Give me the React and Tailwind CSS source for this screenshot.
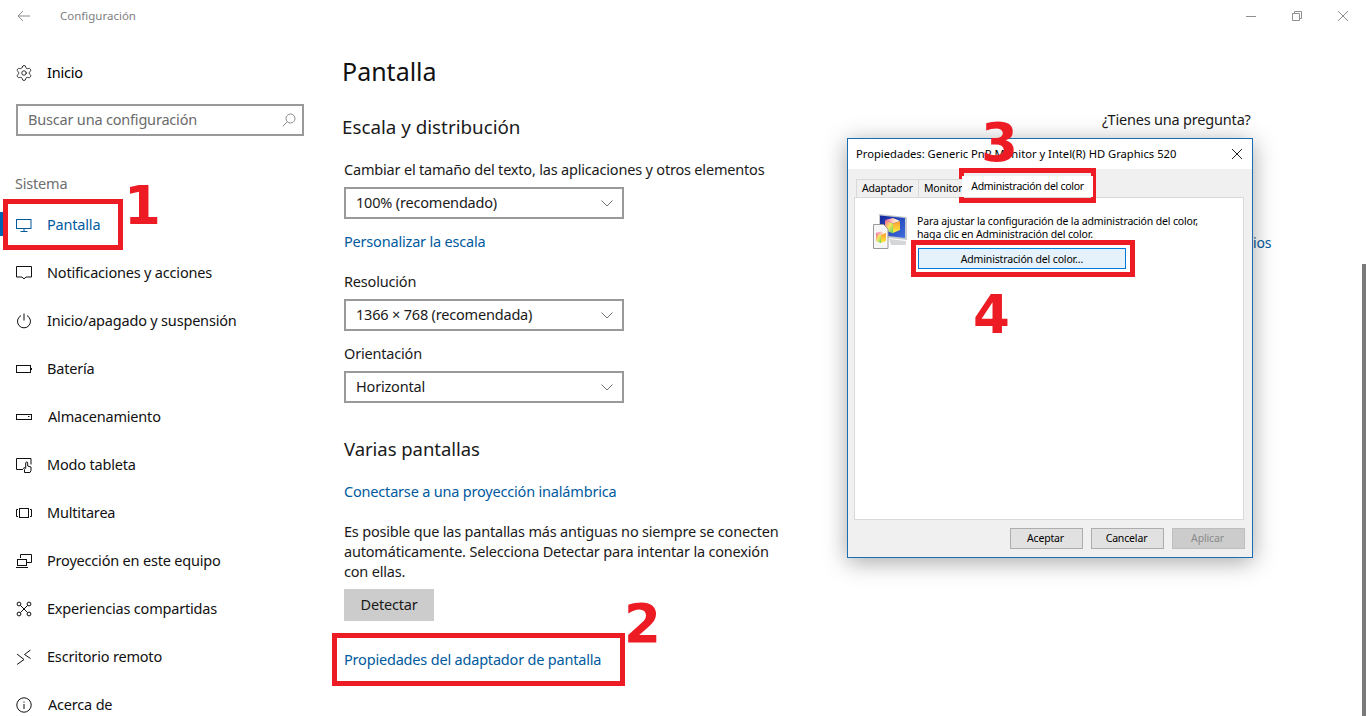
import React from 'react';
import { Settings } from 'lucide-react';

const Ico = ({ children }) => (
  <svg width="16" height="16" viewBox="0 0 16 16" fill="none" stroke="currentColor" strokeWidth="1" className="shrink-0">
    {children}
  </svg>
);

const navItems = [
  { label: 'Notificaciones y acciones', icon: <path d="M0.5 1.5h15v10.5h-5.5l-2 2-2-2h-5.5z" /> },
  { label: 'Inicio/apagado y suspensión', icon: <><path d="M8 0.5v7" /><path d="M5 2.6a6.5 6.5 0 1 0 6 0" /></> },
  { label: 'Batería', icon: <><rect x="0.5" y="4.5" width="14" height="7" /><path d="M15.5 7v2" /></> },
  { label: 'Almacenamiento', icon: <><rect x="0.5" y="5.5" width="15" height="5" /><path d="M12 7.5h1.5" /></>, shift: true },
  { label: 'Modo tableta', icon: <><path d="M7 12.5h-6.5v-11h14.5v6" /><path d="M8.5 15.5v-3l-1-1.5 1-0.5 1.2 1v-5.5a1 1 0 0 1 2 0v3l3.3 1v3.5l-1 2z" /></> },
  { label: 'Multitarea', icon: <><rect x="3.5" y="3.5" width="9" height="9" /><path d="M2 4.5h-1.5v7h1.5M14 4.5h1.5v7h-1.5" /></> },
  { label: 'Proyección en este equipo', icon: <><path d="M4.5 5v-3.5h11v8h-5" /><rect x="1.5" y="6.5" width="9" height="6" /><path d="M0 14.5h12" /></> },
  { label: 'Experiencias compartidas', icon: <><circle cx="3" cy="3" r="1.9" /><circle cx="13" cy="3" r="1.9" /><circle cx="3" cy="13" r="1.9" /><circle cx="13" cy="13" r="1.9" /><path d="M4.4 4.4l7.2 7.2M11.6 4.4l-7.2 7.2" /></> },
  { label: 'Escritorio remoto', icon: <><path d="M1 5l7 5.5-7 5" /><path d="M14.5 1l-6 4.5 6 4" /></> },
  { label: 'Acerca de', icon: <><circle cx="8" cy="8" r="7.2" /><path d="M8 7v5M8 4.5v1.2" /></>, shift: true },
];

const Select = ({ value }) => (
  <div className="w-[280px] h-8 border-2 border-[#999999] flex items-center justify-between pl-[10px] pr-[9px] text-[14.5px] text-[#1a1a1a]">
    <span className="-mt-px">{value}</span>
    <svg width="12" height="7" viewBox="0 0 12 7" fill="none" stroke="#767676" strokeWidth="1"><path d="M0.5 0.5L6 6l5.5-5.5" /></svg>
  </div>
);

const Mark = ({ className }) => <div className={`absolute border-[5px] border-[#ed1c24] ${className}`} />;

const Num = ({ className, children }) => (
  <div className={`absolute font-['DejaVu_Sans',sans-serif] font-bold text-[53px] leading-[58px] tracking-normal text-[#ed1c24] ${className}`}>{children}</div>
);

const DialogButton = ({ children, disabled }) => (
  <div className={`w-[73px] h-[21px] border flex items-center justify-center pt-px pr-[2px] text-[10.5px] ${disabled ? 'border-[#bfbfbf] bg-[#cccccc] text-[#8a8a8a]' : 'border-[#adadad] bg-[#e1e1e1] text-black'}`}>
    {children}
  </div>
);

const ColorIcon = () => (
  <svg width="34" height="35" viewBox="0 0 34 35" className="shrink-0">
    <defs>
      <linearGradient id="scr" x1="0" y1="0" x2="1" y2="1">
        <stop offset="0" stopColor="#12269a" />
        <stop offset="1" stopColor="#3f6fe0" />
      </linearGradient>
      <linearGradient id="top" x1="0" y1="0" x2="1" y2="0">
        <stop offset="0" stopColor="#ff5fa8" />
        <stop offset="0.6" stopColor="#ffd9c0" />
        <stop offset="1" stopColor="#ffffff" />
      </linearGradient>
      <linearGradient id="right" x1="0" y1="0" x2="0" y2="1">
        <stop offset="0" stopColor="#ff9a30" />
        <stop offset="1" stopColor="#f8f040" />
      </linearGradient>
      <linearGradient id="left" x1="0" y1="0" x2="1" y2="1">
        <stop offset="0" stopColor="#f05aa0" />
        <stop offset="0.5" stopColor="#f8e860" />
        <stop offset="1" stopColor="#50d060" />
      </linearGradient>
    </defs>
    <path d="M6 0l28 3v23l-28-3z" fill="#c8ccd0" />
    <path d="M7 1.5l25 2.5v20l-25-3z" fill="url(#scr)" />
    <path d="M16 25l17 2v4l-15 0z" fill="#d4d6d8" />
    <path d="M12 6l8-2 7 3-7 2.500z" fill="url(#top)" />
    <path d="M12 6l8 3.500v10l-8-3.500z" fill="url(#left)" />
    <path d="M20 9.500l7-2.500v9l-7 3z" fill="url(#right)" />
    <path d="M0.500 10.500h10l4.500 4.500v19.500h-14.500z" fill="#f6f6f6" stroke="#9a9a9a" strokeWidth="1" />
    <path d="M3 19l5-1.500 5 1.500-5 2z" fill="url(#top)" />
    <path d="M3 19l5 2v8l-5-2z" fill="url(#left)" />
    <path d="M8 21l5-2v8l-5 2z" fill="url(#right)" />
  </svg>
);

export default function App() {
  return (
    <div className="relative w-[1366px] h-[716px] overflow-hidden bg-white flex flex-col font-['Noto_Sans',sans-serif] tracking-[-0.19px] text-[#1a1a1a]">
      {/* title bar */}
      <div className="h-8 flex items-center shrink-0 text-[#8f8f8f]">
        <svg width="14" height="12" viewBox="0 0 14 12" fill="none" stroke="#8a8a8a" strokeWidth="1" className="ml-[17px]"><path d="M13 6H1M6 1L1 6l5 5" /></svg>
        <span className="ml-[29px] text-[11.5px] tracking-normal text-[#7e7e7e]">Configuración</span>
        <div className="ml-auto flex items-center">
          <svg width="46" height="12" viewBox="0 0 46 12" stroke="#8f8f8f" strokeWidth="1"><path d="M18 6.500h10" /></svg>
          <svg width="46" height="12" viewBox="0 0 46 12" fill="none" stroke="#8f8f8f" strokeWidth="1"><path d="M18.500 3.500h7v7h-7zM20.500 3.500v-2h7v7h-2" /></svg>
          <svg width="46" height="12" viewBox="0 0 46 12" fill="none" stroke="#8f8f8f" strokeWidth="1"><path d="M18 1l10 10M28 1l-10 10" /></svg>
        </div>
      </div>

      <div className="flex flex-1 min-h-0">
        {/* sidebar */}
        <div className="w-[344px] shrink-0">
          <div className="h-12 mt-[17px] flex items-center pl-[15px] gap-[14px] text-[14.5px] text-black">
            <Settings size={18} strokeWidth={1.05} className="shrink-0" />
            <span>Inicio</span>
          </div>
          <div className="ml-4 mt-[7px] w-[288px] h-8 border-2 border-[#999999] flex items-center justify-between pl-[10px] pr-[6px] text-[14.5px] text-[#6b6b6b]">
            <span>Buscar una configuración</span>
            <svg width="14" height="14" viewBox="0 0 14 14" fill="none" stroke="#8a8a8a" strokeWidth="1"><circle cx="8.500" cy="5.500" r="4.500" /><path d="M5.300 8.700L0.800 13.200" /></svg>
          </div>
          <div className="ml-[15px] mt-[37px] leading-5 text-[14.5px] text-[#6e6e6e]">Sistema</div>
          <div className="relative mt-2 h-12 flex items-center pl-4 gap-[15px] text-[14.5px] text-[#005a9e]">
            <div className="absolute left-0 top-[11px] w-[3px] h-[24px] bg-[#0063b1]" />
            <svg width="16" height="16" viewBox="0 0 16 16" fill="none" stroke="currentColor" strokeWidth="1" className="shrink-0"><rect x="0.500" y="2.500" width="14.500" height="9" /><path d="M8 12v2.500M4.500 14.500h7" /></svg>
            <span>Pantalla</span>
          </div>
          {navItems.map((item) => (
            <div key={item.label} className={`h-12 flex items-center pl-4 text-[14.5px] text-[#111111] ${item.shift ? 'gap-4' : 'gap-[15px]'}`}>
              <Ico>{item.icon}</Ico>
              <span>{item.label}</span>
            </div>
          ))}
        </div>

        {/* main */}
        <div className="flex-1 min-w-0">
          <div className="-ml-[2px] mt-[19px] text-[25px] tracking-normal leading-10 text-[#111111]">Pantalla</div>
          <div className="-ml-[2px] mt-[22px] text-[18.8px] tracking-normal leading-7">Escala y distribución</div>
          <div className="mt-[18px] text-[14.5px] leading-5">Cambiar el tamaño del texto, las aplicaciones y otros elementos</div>
          <div className="mt-2"><Select value="100% (recomendado)" /></div>
          <div className="mt-3 text-[14.5px] leading-5 text-[#005a9e]">Personalizar la escala</div>
          <div className="mt-5 text-[14.5px] leading-5">Resolución</div>
          <div className="mt-2"><Select value="1366 × 768 (recomendada)" /></div>
          <div className="mt-3 text-[14.5px] leading-5">Orientación</div>
          <div className="mt-2"><Select value="Horizontal" /></div>
          <div className="mt-8 text-[18.5px] tracking-[-0.05px] leading-7">Varias pantallas</div>
          <div className="mt-[18px] text-[14.5px] leading-5 text-[#005a9e]">Conectarse a una proyección inalámbrica</div>
          <div className="mt-5 w-[450px] text-[14.5px] leading-5">
            Es posible que las pantallas más antiguas no siempre se conecten automáticamente. Selecciona Detectar para intentar la conexión con ellas.
          </div>
          <div className="mt-2 w-[90px] h-8 bg-[#cccccc] flex items-center justify-center text-[14.5px]">Detectar</div>
          <div className="mt-7 text-[14.5px] leading-5 text-[#005a9e]">Propiedades del adaptador de pantalla</div>
        </div>

        {/* right column */}
        <div className="w-[264px] shrink-0 flex">
          <div className="flex-1 min-w-0">
            <div className="mt-[77px] text-[14.5px] leading-5">¿Tienes una pregunta?</div>
            <div className="mt-[104px] ml-[151px] text-[14px] leading-5 text-[#005a9e]">ios</div>
          </div>
          <div className="w-1 shrink-0 flex flex-col">
            <div className="h-[232px]" />
            <div className="flex-1 bg-[#7a7a7a]" />
          </div>
        </div>
      </div>

      {/* dialog */}
      <div className="absolute left-[847px] top-[138px] w-[406px] h-[420px] border border-[#1a6db0] bg-[#f0f0f0] shadow-[0_4px_22px_rgba(0,0,0,0.35)] flex flex-col tracking-[-0.15px]">
        <div className="h-[30px] bg-white flex items-center justify-between pl-2 pr-[9px] text-[11.2px] tracking-normal text-black shrink-0">
          <span>Propiedades: Generic PnP Monitor y Intel(R) HD Graphics 520</span>
          <svg width="12" height="12" viewBox="0 0 12 12" fill="none" stroke="#222222" strokeWidth="1"><path d="M1 1l10 10M11 1L1 11" /></svg>
        </div>
        <div className="mt-[9px] ml-2 flex items-end h-[19px] text-[10.5px] text-black shrink-0 relative z-10">
          <div className="w-[63px] h-[18px] bg-[#f0f0f0] border border-b-0 border-[#d9d9d9] flex items-center justify-center">Adaptador</div>
          <div className="w-[44px] h-[18px] bg-[#f0f0f0] border border-l-0 border-b-0 border-[#d9d9d9] pl-[5px] flex items-center">Monitor</div>
          <div className="w-[131px] h-[21px] -ml-px bg-white flex items-center justify-center tracking-[-0.3px]">Administración del color</div>
        </div>
        <div className="ml-[6px] w-[390px] h-[323px] bg-white border border-[#d9d9d9] shrink-0 pt-[16px] pl-[18px]">
          <div className="flex gap-[10px]">
            <ColorIcon />
            <div className="text-[10.5px] leading-[13px] text-black pt-px">
              <div>Para ajustar la configuración de la administración del color,</div>
              <div>haga clic en Administración del color.</div>
              <div className="mt-[7px] ml-px w-[208px] h-[21px] border border-[#0078d7] bg-[#e5f1fb] flex items-center justify-center pt-px">Administración del color…</div>
            </div>
          </div>
        </div>
        <div className="mt-[8px] mr-[7px] flex justify-end gap-2">
          <DialogButton>Aceptar</DialogButton>
          <DialogButton>Cancelar</DialogButton>
          <DialogButton disabled>Aplicar</DialogButton>
        </div>
      </div>

      {/* red annotations */}
      <Mark className="left-[3px] top-[199px] w-[120px] h-[51px]" />
      <Mark className="left-[332px] top-[633px] w-[293px] h-[53px]" />
      <Mark className="left-[959px] top-[168px] w-[137px] h-[35px]" />
      <Mark className="left-[911px] top-[240px] w-[224px] h-[37px]" />
      <Num className="left-[124px] top-[177px]">1</Num>
      <Num className="left-[624px] top-[595px]">2</Num>
      <Num className="left-[981px] top-[114px]">3</Num>
      <Num className="left-[973px] top-[286px]">4</Num>
    </div>
  );
}
